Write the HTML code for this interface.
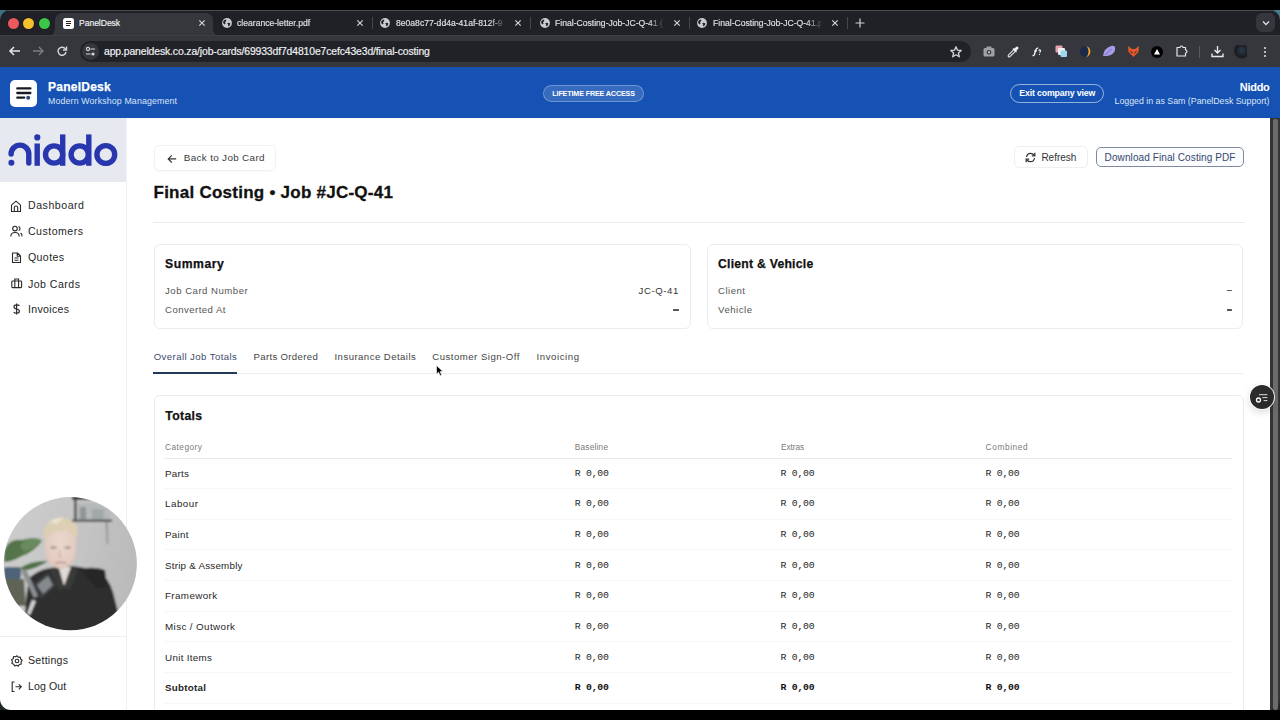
<!DOCTYPE html>
<html><head><meta charset="utf-8">
<style>
*{margin:0;padding:0;box-sizing:border-box}
html,body{width:1280px;height:720px;overflow:hidden;background:#000;font-family:"Liberation Sans",sans-serif}
.a{position:absolute}
.t{position:absolute;white-space:nowrap;line-height:1}
svg.i{position:absolute;overflow:visible}
</style></head>
<body>
<div class="a" style="left:0px;top:10px;width:10px;height:10px;background:#3f6e86;"></div>
<div class="a" style="left:1270px;top:10px;width:10px;height:10px;background:#4a7a92;"></div>
<div class="a" style="left:0px;top:10px;width:1280px;height:700px;background:#1f2127;border-radius:10px 10px 0 0"></div>
<div class="a" style="left:0px;top:690px;width:12px;height:20px;background:#1c2a2a;"></div>
<div class="a" style="left:8px;top:10px;width:1264px;height:1px;background:#4a4c52;"></div>
<div class="a" style="left:7.8999999999999995px;top:17.6px;width:11.4px;height:11.4px;background:#ec5a60;border-radius:50%;box-shadow:0 0 0 0.6px rgba(0,0,0,0.35)"></div>
<div class="a" style="left:23.0px;top:17.6px;width:11.4px;height:11.4px;background:#f4c02e;border-radius:50%;box-shadow:0 0 0 0.6px rgba(0,0,0,0.35)"></div>
<div class="a" style="left:38.5px;top:17.6px;width:11.4px;height:11.4px;background:#3bc74a;border-radius:50%;box-shadow:0 0 0 0.6px rgba(0,0,0,0.35)"></div>
<svg class="i" style="left:47px;top:13px" width="176" height="23"><path d="M0 23 Q8 23 8 15 L8 8 Q8 0 16 0 L158 0 Q166 0 166 8 L166 15 Q166 23 174 23 Z" fill="#35373d"/></svg>
<div class="a" style="left:63px;top:18px;width:11px;height:11px;background:#fff;border-radius:2.5px"></div>
<svg class="i" style="left:63px;top:18px" width="11" height="11"><path d="M3 3.5H8M3 5.5H8M3 7.5H7" stroke="#222" stroke-width="1.1"/></svg>
<div class="t" style="left:79px;top:18.62px;font-size:8.6px;color:#f2f3f5;font-weight:normal;letter-spacing:-0.05px;-webkit-text-stroke:0.15px #f2f3f5;">PanelDesk</div>
<svg class="i" style="left:196.5px;top:18px" width="10" height="10"><path d="M2.3 2.3L7.7 7.7M7.7 2.3L2.3 7.7" stroke="#d0d1d4" stroke-width="1.2"/></svg>
<svg class="i" style="left:220.8px;top:17.3px" width="12" height="12"><circle cx="6" cy="6" r="4.9" fill="#cacbce"/><path d="M2.2 4.2 Q3.5 2.5 5.2 2.6 Q5.6 4 4.5 4.8 Q3.6 5.6 4.6 6.6 L3.2 7.6 Q1.8 6.2 2.2 4.2Z" fill="#1f2127"/><path d="M6.2 6.2 Q7.6 5.4 9.4 6.4 Q9.2 8.4 7.4 9.6 Q6.8 8.4 7.2 7.6Z" fill="#1f2127"/></svg>
<div class="t" style="left:237px;top:18.52px;font-size:8.6px;color:#dfe0e3;-webkit-text-stroke:0.15px #dfe0e3;width:111px;overflow:hidden;padding-bottom:3px;-webkit-mask-image:linear-gradient(90deg,#000 85%,transparent)">clearance-letter.pdf</div>
<svg class="i" style="left:355px;top:18px" width="10" height="10"><path d="M2.3 2.3L7.7 7.7M7.7 2.3L2.3 7.7" stroke="#d2d3d6" stroke-width="1.2"/></svg>
<svg class="i" style="left:378.8px;top:17.3px" width="12" height="12"><circle cx="6" cy="6" r="4.9" fill="#cacbce"/><path d="M2.2 4.2 Q3.5 2.5 5.2 2.6 Q5.6 4 4.5 4.8 Q3.6 5.6 4.6 6.6 L3.2 7.6 Q1.8 6.2 2.2 4.2Z" fill="#1f2127"/><path d="M6.2 6.2 Q7.6 5.4 9.4 6.4 Q9.2 8.4 7.4 9.6 Q6.8 8.4 7.2 7.6Z" fill="#1f2127"/></svg>
<div class="t" style="left:396px;top:18.52px;font-size:8.6px;color:#dfe0e3;-webkit-text-stroke:0.15px #dfe0e3;width:110px;overflow:hidden;padding-bottom:3px;-webkit-mask-image:linear-gradient(90deg,#000 85%,transparent)">8e0a8c77-dd4a-41af-812f-9</div>
<svg class="i" style="left:513px;top:18px" width="10" height="10"><path d="M2.3 2.3L7.7 7.7M7.7 2.3L2.3 7.7" stroke="#d2d3d6" stroke-width="1.2"/></svg>
<svg class="i" style="left:538.8px;top:17.3px" width="12" height="12"><circle cx="6" cy="6" r="4.9" fill="#cacbce"/><path d="M2.2 4.2 Q3.5 2.5 5.2 2.6 Q5.6 4 4.5 4.8 Q3.6 5.6 4.6 6.6 L3.2 7.6 Q1.8 6.2 2.2 4.2Z" fill="#1f2127"/><path d="M6.2 6.2 Q7.6 5.4 9.4 6.4 Q9.2 8.4 7.4 9.6 Q6.8 8.4 7.2 7.6Z" fill="#1f2127"/></svg>
<div class="t" style="left:555px;top:18.52px;font-size:8.6px;color:#dfe0e3;-webkit-text-stroke:0.15px #dfe0e3;width:110px;overflow:hidden;padding-bottom:3px;-webkit-mask-image:linear-gradient(90deg,#000 85%,transparent)">Final-Costing-Job-JC-Q-41 (</div>
<svg class="i" style="left:672px;top:18px" width="10" height="10"><path d="M2.3 2.3L7.7 7.7M7.7 2.3L2.3 7.7" stroke="#d2d3d6" stroke-width="1.2"/></svg>
<svg class="i" style="left:695.8px;top:17.3px" width="12" height="12"><circle cx="6" cy="6" r="4.9" fill="#cacbce"/><path d="M2.2 4.2 Q3.5 2.5 5.2 2.6 Q5.6 4 4.5 4.8 Q3.6 5.6 4.6 6.6 L3.2 7.6 Q1.8 6.2 2.2 4.2Z" fill="#1f2127"/><path d="M6.2 6.2 Q7.6 5.4 9.4 6.4 Q9.2 8.4 7.4 9.6 Q6.8 8.4 7.2 7.6Z" fill="#1f2127"/></svg>
<div class="t" style="left:713px;top:18.52px;font-size:8.6px;color:#dfe0e3;-webkit-text-stroke:0.15px #dfe0e3;width:110px;overflow:hidden;padding-bottom:3px;-webkit-mask-image:linear-gradient(90deg,#000 85%,transparent)">Final-Costing-Job-JC-Q-41.p</div>
<svg class="i" style="left:830px;top:18px" width="10" height="10"><path d="M2.3 2.3L7.7 7.7M7.7 2.3L2.3 7.7" stroke="#d2d3d6" stroke-width="1.2"/></svg>
<div class="a" style="left:372px;top:17px;width:1px;height:12px;background:#45474d;"></div>
<div class="a" style="left:530px;top:17px;width:1px;height:12px;background:#45474d;"></div>
<div class="a" style="left:689px;top:17px;width:1px;height:12px;background:#45474d;"></div>
<div class="a" style="left:847px;top:17px;width:1px;height:12px;background:#45474d;"></div>
<svg class="i" style="left:855px;top:18px" width="10" height="10"><path d="M5 0.5V9.5M0.5 5H9.5" stroke="#d0d1d4" stroke-width="1.2"/></svg>
<div class="a" style="left:1256px;top:13px;width:19px;height:19px;background:#35373d;border-radius:6px"></div>
<svg class="i" style="left:1261px;top:19px" width="10" height="8"><path d="M2 2.5L5 5.5L8 2.5" stroke="#e0e1e4" stroke-width="1.3" fill="none"/></svg>
<div class="a" style="left:0px;top:35px;width:1280px;height:32px;background:#35373d;"></div>
<div class="a" style="left:0px;top:35px;width:1280px;height:1px;background:#3d3f45;"></div>
<svg class="i" style="left:8px;top:45px" width="14" height="12"><path d="M2 6H12M6 2L2 6L6 10" stroke="#e4e5e8" stroke-width="1.6" fill="none"/></svg>
<svg class="i" style="left:31px;top:45px" width="14" height="12"><path d="M2 6H12M8 2L12 6L8 10" stroke="#7b7d82" stroke-width="1.4" fill="none"/></svg>
<svg class="i" style="left:56px;top:45px" width="12" height="12"><path d="M9.5 4.2 A4 4 0 1 0 10 7" stroke="#d6d7da" stroke-width="1.4" fill="none"/><path d="M10.5 1.5V5H7" stroke="#d6d7da" stroke-width="1.4" fill="none"/></svg>
<div class="a" style="left:80px;top:41px;width:891px;height:21px;background:#202228;border-radius:11px"></div>
<div class="a" style="left:82px;top:43px;width:17px;height:17px;background:#35373d;border-radius:50%"></div>
<svg class="i" style="left:85px;top:46px" width="11" height="11"><circle cx="3" cy="3" r="1.6" stroke="#d6d7da" stroke-width="1.1" fill="none"/><path d="M5.5 3H10M1 8H5.5" stroke="#d6d7da" stroke-width="1.2"/><circle cx="8" cy="8" r="1.6" fill="#d6d7da"/></svg>
<div class="t" style="left:104px;top:47.20px;font-size:10.4px;color:#eeeff1;font-weight:normal;letter-spacing:-0.12px;-webkit-text-stroke:0.2px #eeeff1;">app.paneldesk.co.za/job-cards/69933df7d4810e7cefc43e3d/final-costing</div>
<svg class="i" style="left:950px;top:46px" width="12" height="12"><path d="M6 0.8L7.5 4.2L11.2 4.5L8.4 7L9.3 10.8L6 8.8L2.7 10.8L3.6 7L0.8 4.5L4.5 4.2Z" stroke="#d6d7da" stroke-width="1.3" fill="none" stroke-linejoin="round"/></svg>
<svg class="i" style="left:983px;top:46px" width="12" height="11"><rect x="0.5" y="2" width="11" height="8.5" rx="1.5" fill="#9ea0a4"/><rect x="3.5" y="0.5" width="5" height="2" fill="#9ea0a4"/><circle cx="6" cy="6.2" r="2.3" fill="#35373d"/><circle cx="6" cy="6.2" r="1" fill="#e8e8e8"/></svg>
<svg class="i" style="left:1007px;top:45px" width="13" height="13"><path d="M2.2 10.8 L7.5 5.5" stroke="#f0f0f0" stroke-width="3.2" stroke-linecap="round"/><path d="M2.2 10.8 L7.5 5.5" stroke="#35373d" stroke-width="1.2" stroke-linecap="round"/><path d="M6.5 4.5 L9 2 Q10 1 11 2 Q12 3 11 4 L8.5 6.5Z" fill="#f0f0f0"/><path d="M6 3.5L9.5 7" stroke="#f0f0f0" stroke-width="1.4"/></svg>
<svg class="i" style="left:1031px;top:46px" width="12" height="12"><path d="M1.5 9.5 Q3 10 3.6 8 L5 3.5 Q5.6 1.8 7.2 2.2" stroke="#f0f0f0" stroke-width="1.4" fill="none"/><path d="M3 5H6" stroke="#f0f0f0" stroke-width="1.1"/><path d="M7.6 4.6 Q8.2 3.6 9.2 4 Q10 4.6 9.2 5.6 L8.6 6.6" stroke="#f0f0f0" stroke-width="1.1" fill="none"/><circle cx="8.5" cy="8.4" r="0.6" fill="#f0f0f0"/></svg>
<svg class="i" style="left:1055px;top:45px" width="13" height="13"><rect x="0.5" y="0.5" width="7" height="7" rx="1" fill="#e8a0b0"/><rect x="3" y="3" width="7" height="7" rx="1" fill="#f0f0f0"/><rect x="5.5" y="5.5" width="6.5" height="6.5" rx="1" fill="#9fd6ef"/></svg>
<svg class="i" style="left:1079px;top:45px" width="13" height="13"><circle cx="6.5" cy="6.5" r="5.5" fill="#1c2a4a"/><path d="M6 1 A5.5 5.5 0 0 1 6 12 A3.5 5.5 0 0 0 6 1Z" fill="#f0a030"/></svg>
<svg class="i" style="left:1102px;top:45px" width="15" height="13"><path d="M1 11 Q2 3 9 1 Q14 0 13 5 Q12 10 5 11 Z" fill="#a59de8"/><path d="M3 10 L10 4" stroke="#6f68c0" stroke-width="0.8"/></svg>
<svg class="i" style="left:1127px;top:45px" width="13" height="13"><path d="M1 1L5 4L8 4L12 1L11.5 7L6.5 12L1.5 7Z" fill="#e2582e"/><path d="M3.5 6.5L5.5 8M9.5 6.5L7.5 8" stroke="#3a1a10" stroke-width="1"/></svg>
<svg class="i" style="left:1151px;top:46px" width="12" height="12"><circle cx="6" cy="6" r="6" fill="#000"/><path d="M6 3L9 8.5H3Z" fill="#fff"/></svg>
<svg class="i" style="left:1175px;top:45px" width="13" height="13"><path d="M2 2.5H5Q5 1 6.5 1Q8 1 8 2.5H10.5V5Q12 5 12 6.5Q12 8 10.5 8V11H2Z" stroke="#e6e7ea" stroke-width="1.2" fill="none" stroke-linejoin="round"/></svg>
<div class="a" style="left:1199px;top:46px;width:1px;height:12px;background:#5a5c62;"></div>
<svg class="i" style="left:1211px;top:45px" width="13" height="13"><path d="M6.5 1V8M3.5 5L6.5 8L9.5 5M1 8.5V11.5H12V8.5" stroke="#e6e7ea" stroke-width="1.4" fill="none"/></svg>
<div class="a" style="left:1234px;top:45px;width:13px;height:14px;border-radius:3px;background:radial-gradient(circle at 60% 40%,#2a3a50,#1a1a1a 60%,#35373d 75%)"></div>
<div class="a" style="left:1264px;top:47.2px;width:2.2px;height:2.2px;background:#e6e7ea;border-radius:50%"></div>
<div class="a" style="left:1264px;top:51.2px;width:2.2px;height:2.2px;background:#e6e7ea;border-radius:50%"></div>
<div class="a" style="left:1264px;top:55.2px;width:2.2px;height:2.2px;background:#e6e7ea;border-radius:50%"></div>
<div class="a" style="left:0px;top:67px;width:1280px;height:51px;background:#1552b4;"></div>
<div class="a" style="left:10px;top:80px;width:27px;height:27px;background:#ffffff;border-radius:5px"></div>
<svg class="i" style="left:10px;top:80px" width="27" height="27"><path d="M7.3 8.4H20.4M7.3 13H20.4M7.3 17.7H14.2" stroke="#161a22" stroke-width="2.3" stroke-linecap="round"/><circle cx="18.2" cy="17.7" r="2" fill="#2a4a80"/></svg>
<div class="t" style="left:48px;top:81.44px;font-size:12px;color:#ffffff;font-weight:bold;letter-spacing:0.25px;-webkit-text-stroke:0.25px #fff;">PanelDesk</div>
<div class="t" style="left:48px;top:97.45px;font-size:8.8px;color:#dbe5f7;font-weight:normal;letter-spacing:0.14px;">Modern Workshop Management</div>
<div class="a" style="left:543px;top:84.5px;width:101px;height:17.5px;background:rgba(255,255,255,0.15);border-radius:9px;border:1px solid rgba(255,255,255,0.28)"></div>
<div class="t" style="left:552.3px;top:89.71px;font-size:7.2px;color:#ffffff;font-weight:bold;letter-spacing:-0.15px;">LIFETIME FREE ACCESS</div>
<div class="a" style="left:1009.5px;top:84px;width:94px;height:19px;background:transparent;border-radius:10px;border:1px solid rgba(255,255,255,0.55)"></div>
<div class="t" style="left:1019.3px;top:88.95px;font-size:8.8px;color:#ffffff;font-weight:bold;letter-spacing:-0.17px;">Exit company view</div>
<div class="t" style="right:10.5px;top:82.09px;font-size:11px;color:#ffffff;font-weight:bold;letter-spacing:-0.3px;">Niddo</div>
<div class="t" style="right:10.5px;top:97.05px;font-size:8.8px;color:#dbe5f7;font-weight:normal;letter-spacing:0px;">Logged in as Sam (PanelDesk Support)</div>
<div class="a" style="left:0px;top:118px;width:1270px;height:592px;background:#ffffff;border-bottom-left-radius:11px"></div>
<div class="a" style="left:0px;top:118px;width:126px;height:64px;background:#e6e9ef;"></div>
<div class="a" style="left:126px;top:118px;width:1px;height:592px;background:#eef0f3;"></div>
<div class="a" style="left:0px;top:636px;width:126px;height:1px;background:#eceef1;"></div>
<svg class="i" style="left:0;top:0" width="1" height="1">
<g stroke="#2837ad" stroke-width="5.4" fill="none" stroke-linecap="round">
<path d="M11.1 154 A8.85 8.85 0 0 1 28.8 154 V163"/>
<path d="M37.2 143.5 V165.8" stroke-linecap="butt"/>
<circle cx="54.1" cy="154.5" r="8.6"/>
<path d="M62.7 134.4 V165.8" stroke-linecap="butt"/>
<circle cx="79.7" cy="154.5" r="8.6"/>
<path d="M88.8 134.4 V165.8" stroke-linecap="butt"/>
<circle cx="105.8" cy="154.5" r="8.9"/>
</g>
<circle cx="11.4" cy="162.8" r="3" fill="#2837ad"/>
<circle cx="37.3" cy="137.4" r="3.1" fill="#2837ad"/>
</svg>
<svg class="i" style="left:10px;top:199.5px" width="13" height="13" viewBox="0 0 13 13"><path d="M1.5 11.5V5.2L6 1.2L10.5 5.2V11.5Z M4.3 11.5V7.5Q4.3 6 6 6Q7.7 6 7.7 7.5V11.5" stroke="#2a2a2a" stroke-width="1.1" fill="none" stroke-linejoin="round"/></svg>
<svg class="i" style="left:10px;top:225px" width="13" height="13" viewBox="0 0 13 13"><circle cx="5" cy="3.6" r="2.3" stroke="#2a2a2a" stroke-width="1.1" fill="none"/><path d="M0.8 11.5Q0.8 7.5 5 7.5Q9.2 7.5 9.2 11.5" stroke="#2a2a2a" stroke-width="1.1" fill="none"/><path d="M8.5 1.4Q10.2 2 10 3.8Q9.8 5 8.8 5.6M10.5 8Q12.3 9 12 11.5" stroke="#2a2a2a" stroke-width="1.1" fill="none"/></svg>
<svg class="i" style="left:11px;top:252px" width="13" height="13" viewBox="0 0 13 13"><path d="M1.5 1H6.5L9.5 4V10.5H1.5Z M6.2 1V4.3H9.5 M3.5 6H7.5M3.5 8.2H7.5" stroke="#2a2a2a" stroke-width="1.1" fill="none" stroke-linejoin="round"/></svg>
<svg class="i" style="left:10.6px;top:277.6px" width="13" height="13" viewBox="0 0 13 13"><rect x="0.8" y="3" width="9.8" height="6.6" rx="0.8" stroke="#2a2a2a" stroke-width="1.1" fill="none"/><path d="M3.8 3V1H7.6V3M3.8 3V9.6M7.6 3V9.6" stroke="#2a2a2a" stroke-width="1.1" fill="none"/></svg>
<svg class="i" style="left:12.5px;top:303px" width="13" height="13" viewBox="0 0 13 13"><path d="M3.6 0.5V11.5 M6.5 2.8Q6 1.8 3.6 1.8Q1 1.8 1 3.8Q1 5.6 3.6 6Q6.4 6.4 6.4 8.3Q6.4 10.2 3.6 10.2Q1.2 10.2 0.8 8.8" stroke="#2a2a2a" stroke-width="1.2" fill="none"/></svg>
<div class="t" style="left:28px;top:199.53px;font-size:10.6px;color:#262626;font-weight:normal;letter-spacing:0.52px;">Dashboard</div>
<div class="t" style="left:28px;top:226.23px;font-size:10.6px;color:#262626;font-weight:normal;letter-spacing:0.47px;">Customers</div>
<div class="t" style="left:28px;top:252.33px;font-size:10.6px;color:#262626;font-weight:normal;letter-spacing:0.37px;">Quotes</div>
<div class="t" style="left:28px;top:278.53px;font-size:10.6px;color:#262626;font-weight:normal;letter-spacing:0.46px;">Job Cards</div>
<div class="t" style="left:28px;top:304.43px;font-size:10.6px;color:#262626;font-weight:normal;letter-spacing:0.31px;">Invoices</div>
<div class="t" style="left:28px;top:654.83px;font-size:10.6px;color:#262626;font-weight:normal;letter-spacing:0.25px;">Settings</div>
<div class="t" style="left:28px;top:681.03px;font-size:10.6px;color:#262626;font-weight:normal;letter-spacing:0.1px;">Log Out</div>
<svg class="i" style="left:10.8px;top:654.5px" width="13" height="13" viewBox="0 0 13 13"><path d="M6 0.8L7.3 2.2L9.3 2L9.6 4L11.2 5.3L10 7L10.3 9L8.3 9.5L7.3 11.2L5.5 10.3L3.6 11L2.8 9.2L0.9 8.5L1.4 6.5L0.6 4.7L2.3 3.6L2.5 1.6L4.5 1.8Z" stroke="#2a2a2a" stroke-width="1.1" fill="none" stroke-linejoin="round"/><circle cx="6" cy="6" r="1.8" stroke="#2a2a2a" stroke-width="1.1" fill="none"/></svg>
<svg class="i" style="left:11px;top:681px" width="13" height="13" viewBox="0 0 13 13"><path d="M3.5 1H1.2V10.5H3.5 M4.5 5.8H10.2M7.8 3.3L10.3 5.8L7.8 8.3" stroke="#2a2a2a" stroke-width="1.1" fill="none"/></svg>
<div class="a" style="left:154px;top:145px;width:121.5px;height:25.5px;background:#ffffff;border:1px solid #f1f1f1;border-radius:5px;box-shadow:0 1px 2px rgba(0,0,0,0.03)"></div>
<svg class="i" style="left:166.6px;top:155px" width="13" height="13" viewBox="0 0 13 13"><path d="M9.2 3.9H1.2M4.8 0.3L1.2 3.9L4.8 7.5" stroke="#333" stroke-width="1.15" fill="none"/></svg>
<div class="t" style="left:183.8px;top:152.82px;font-size:9.9px;color:#3b3b3b;font-weight:normal;letter-spacing:0.33px;">Back to Job Card</div>
<div class="t" style="left:153.5px;top:184.21px;font-size:17px;color:#111111;font-weight:bold;letter-spacing:0.25px;-webkit-text-stroke:0.3px #111;">Final Costing &bull; Job #JC-Q-41</div>
<div class="a" style="left:1013.5px;top:145.5px;width:74px;height:22.5px;background:#ffffff;border:1px solid #efefef;border-radius:5px"></div>
<svg class="i" style="left:1024.8px;top:151.5px" width="13" height="13" viewBox="0 0 13 13"><path d="M1.5 5Q2.2 1.3 5.5 1.3Q7.8 1.3 9 3.2M9.5 6Q8.8 9.7 5.5 9.7Q3.2 9.7 2 7.8" stroke="#333" stroke-width="1.3" fill="none"/><path d="M9.8 0.8V3.8H6.8M1.2 10.2V7.2H4.2" stroke="#333" stroke-width="1.3" fill="none"/></svg>
<div class="t" style="left:1041.4px;top:152.94px;font-size:10px;color:#333333;font-weight:normal;letter-spacing:0.0px;">Refresh</div>
<div class="a" style="left:1096px;top:146.7px;width:147.5px;height:20.8px;background:#fbfcfe;border:1.3px solid #8089a0;border-radius:5px"></div>
<div class="t" style="left:1104.6px;top:152.94px;font-size:10px;color:#34476c;font-weight:normal;letter-spacing:0.1px;">Download Final Costing PDF</div>
<div class="a" style="left:153px;top:222px;width:1092px;height:1px;background:#ececec;"></div>
<div class="a" style="left:153.5px;top:244px;width:537px;height:84.5px;background:#ffffff;border:1px solid #ececec;border-radius:6px"></div>
<div class="t" style="left:165px;top:258.37px;font-size:12.2px;color:#111111;font-weight:bold;letter-spacing:0.55px;-webkit-text-stroke:0.25px #111;">Summary</div>
<div class="t" style="left:165px;top:285.67px;font-size:9.6px;color:#555555;font-weight:normal;letter-spacing:0.5px;">Job Card Number</div>
<div class="t" style="left:165px;top:304.67px;font-size:9.6px;color:#555555;font-weight:normal;letter-spacing:0.46px;">Converted At</div>
<div class="t" style="right:601px;top:285.67px;font-size:9.6px;color:#333333;font-weight:normal;letter-spacing:0.6px;">JC-Q-41</div>
<div class="a" style="left:673.4px;top:309.2px;width:5.3px;height:1.4px;background:#555555;border-radius:0.6px"></div>
<div class="a" style="left:707px;top:244px;width:536px;height:84.5px;background:#ffffff;border:1px solid #ececec;border-radius:6px"></div>
<div class="t" style="left:718px;top:258.37px;font-size:12.2px;color:#111111;font-weight:bold;letter-spacing:0.25px;-webkit-text-stroke:0.25px #111;">Client &amp; Vehicle</div>
<div class="t" style="left:718px;top:285.67px;font-size:9.6px;color:#555555;font-weight:normal;letter-spacing:0.49px;">Client</div>
<div class="t" style="left:718px;top:304.67px;font-size:9.6px;color:#555555;font-weight:normal;letter-spacing:0.51px;">Vehicle</div>
<div class="a" style="left:1226.6px;top:289.8px;width:5.3px;height:1.4px;background:#555555;border-radius:0.6px"></div>
<div class="a" style="left:1226.8px;top:309.2px;width:5.3px;height:1.4px;background:#555555;border-radius:0.6px"></div>
<div class="a" style="left:153px;top:373px;width:1090px;height:1px;background:#ededed;"></div>
<div class="a" style="left:153px;top:371.5px;width:84px;height:2px;background:#23395a;"></div>
<div class="t" style="left:153.7px;top:351.77px;font-size:9.6px;color:#3c4b6b;font-weight:normal;letter-spacing:0.42000000000000004px;">Overall Job Totals</div>
<div class="t" style="left:253.5px;top:351.77px;font-size:9.6px;color:#444444;font-weight:normal;letter-spacing:0.32999999999999996px;">Parts Ordered</div>
<div class="t" style="left:334.5px;top:351.77px;font-size:9.6px;color:#444444;font-weight:normal;letter-spacing:0.44999999999999996px;">Insurance Details</div>
<div class="t" style="left:432.3px;top:351.77px;font-size:9.6px;color:#444444;font-weight:normal;letter-spacing:0.49px;">Customer Sign-Off</div>
<div class="t" style="left:536.5px;top:351.77px;font-size:9.6px;color:#444444;font-weight:normal;letter-spacing:0.59px;">Invoicing</div>
<div class="a" style="left:153.5px;top:395px;width:1090px;height:340px;background:#ffffff;border:1px solid #ececec;border-radius:6px"></div>
<div class="t" style="left:165.3px;top:409.87px;font-size:12.2px;color:#111111;font-weight:bold;letter-spacing:0.35px;-webkit-text-stroke:0.25px #111;">Totals</div>
<div class="t" style="left:165px;top:442.57px;font-size:8.3px;color:#7a7a7a;font-weight:normal;letter-spacing:0.47px;">Category</div>
<div class="t" style="left:574.8px;top:442.57px;font-size:8.3px;color:#7a7a7a;font-weight:normal;letter-spacing:0.2px;">Baseline</div>
<div class="t" style="left:781px;top:442.57px;font-size:8.3px;color:#7a7a7a;font-weight:normal;letter-spacing:-0.05px;">Extras</div>
<div class="t" style="left:985.6px;top:442.57px;font-size:8.3px;color:#7a7a7a;font-weight:normal;letter-spacing:0.6px;">Combined</div>
<div class="a" style="left:164px;top:458px;width:1068px;height:1px;background:#e9e9e9;"></div>
<div class="t" style="left:165px;top:468.70px;font-size:9.8px;color:#262626;font-weight:normal;letter-spacing:0.28px;">Parts</div>
<div class="t" style="left:574.8px;top:468.70px;font-size:9.8px;color:#262626;font-weight:normal;letter-spacing:-0.25px;font-family:'Liberation Mono',monospace;">R 0,00</div>
<div class="t" style="left:780.5px;top:468.70px;font-size:9.8px;color:#262626;font-weight:normal;letter-spacing:-0.25px;font-family:'Liberation Mono',monospace;">R 0,00</div>
<div class="t" style="left:985.6px;top:468.70px;font-size:9.8px;color:#262626;font-weight:normal;letter-spacing:-0.25px;font-family:'Liberation Mono',monospace;">R 0,00</div>
<div class="a" style="left:164px;top:488.0px;width:1068px;height:1px;background:#f7f7f7;"></div>
<div class="t" style="left:165px;top:499.35px;font-size:9.8px;color:#262626;font-weight:normal;letter-spacing:0.5px;">Labour</div>
<div class="t" style="left:574.8px;top:499.35px;font-size:9.8px;color:#262626;font-weight:normal;letter-spacing:-0.25px;font-family:'Liberation Mono',monospace;">R 0,00</div>
<div class="t" style="left:780.5px;top:499.35px;font-size:9.8px;color:#262626;font-weight:normal;letter-spacing:-0.25px;font-family:'Liberation Mono',monospace;">R 0,00</div>
<div class="t" style="left:985.6px;top:499.35px;font-size:9.8px;color:#262626;font-weight:normal;letter-spacing:-0.25px;font-family:'Liberation Mono',monospace;">R 0,00</div>
<div class="a" style="left:164px;top:518.65px;width:1068px;height:1px;background:#f7f7f7;"></div>
<div class="t" style="left:165px;top:530.00px;font-size:9.8px;color:#262626;font-weight:normal;letter-spacing:0.3px;">Paint</div>
<div class="t" style="left:574.8px;top:530.00px;font-size:9.8px;color:#262626;font-weight:normal;letter-spacing:-0.25px;font-family:'Liberation Mono',monospace;">R 0,00</div>
<div class="t" style="left:780.5px;top:530.00px;font-size:9.8px;color:#262626;font-weight:normal;letter-spacing:-0.25px;font-family:'Liberation Mono',monospace;">R 0,00</div>
<div class="t" style="left:985.6px;top:530.00px;font-size:9.8px;color:#262626;font-weight:normal;letter-spacing:-0.25px;font-family:'Liberation Mono',monospace;">R 0,00</div>
<div class="a" style="left:164px;top:549.3px;width:1068px;height:1px;background:#f7f7f7;"></div>
<div class="t" style="left:165px;top:560.65px;font-size:9.8px;color:#262626;font-weight:normal;letter-spacing:0.23px;">Strip &amp; Assembly</div>
<div class="t" style="left:574.8px;top:560.65px;font-size:9.8px;color:#262626;font-weight:normal;letter-spacing:-0.25px;font-family:'Liberation Mono',monospace;">R 0,00</div>
<div class="t" style="left:780.5px;top:560.65px;font-size:9.8px;color:#262626;font-weight:normal;letter-spacing:-0.25px;font-family:'Liberation Mono',monospace;">R 0,00</div>
<div class="t" style="left:985.6px;top:560.65px;font-size:9.8px;color:#262626;font-weight:normal;letter-spacing:-0.25px;font-family:'Liberation Mono',monospace;">R 0,00</div>
<div class="a" style="left:164px;top:579.95px;width:1068px;height:1px;background:#f7f7f7;"></div>
<div class="t" style="left:165px;top:591.30px;font-size:9.8px;color:#262626;font-weight:normal;letter-spacing:0.38px;">Framework</div>
<div class="t" style="left:574.8px;top:591.30px;font-size:9.8px;color:#262626;font-weight:normal;letter-spacing:-0.25px;font-family:'Liberation Mono',monospace;">R 0,00</div>
<div class="t" style="left:780.5px;top:591.30px;font-size:9.8px;color:#262626;font-weight:normal;letter-spacing:-0.25px;font-family:'Liberation Mono',monospace;">R 0,00</div>
<div class="t" style="left:985.6px;top:591.30px;font-size:9.8px;color:#262626;font-weight:normal;letter-spacing:-0.25px;font-family:'Liberation Mono',monospace;">R 0,00</div>
<div class="a" style="left:164px;top:610.6px;width:1068px;height:1px;background:#f7f7f7;"></div>
<div class="t" style="left:165px;top:621.95px;font-size:9.8px;color:#262626;font-weight:normal;letter-spacing:0.4px;">Misc / Outwork</div>
<div class="t" style="left:574.8px;top:621.95px;font-size:9.8px;color:#262626;font-weight:normal;letter-spacing:-0.25px;font-family:'Liberation Mono',monospace;">R 0,00</div>
<div class="t" style="left:780.5px;top:621.95px;font-size:9.8px;color:#262626;font-weight:normal;letter-spacing:-0.25px;font-family:'Liberation Mono',monospace;">R 0,00</div>
<div class="t" style="left:985.6px;top:621.95px;font-size:9.8px;color:#262626;font-weight:normal;letter-spacing:-0.25px;font-family:'Liberation Mono',monospace;">R 0,00</div>
<div class="a" style="left:164px;top:641.25px;width:1068px;height:1px;background:#f7f7f7;"></div>
<div class="t" style="left:165px;top:652.60px;font-size:9.8px;color:#262626;font-weight:normal;letter-spacing:0.32px;">Unit Items</div>
<div class="t" style="left:574.8px;top:652.60px;font-size:9.8px;color:#262626;font-weight:normal;letter-spacing:-0.25px;font-family:'Liberation Mono',monospace;">R 0,00</div>
<div class="t" style="left:780.5px;top:652.60px;font-size:9.8px;color:#262626;font-weight:normal;letter-spacing:-0.25px;font-family:'Liberation Mono',monospace;">R 0,00</div>
<div class="t" style="left:985.6px;top:652.60px;font-size:9.8px;color:#262626;font-weight:normal;letter-spacing:-0.25px;font-family:'Liberation Mono',monospace;">R 0,00</div>
<div class="a" style="left:164px;top:671.9px;width:1068px;height:1px;background:#f7f7f7;"></div>
<div class="t" style="left:165px;top:683.25px;font-size:9.8px;color:#262626;font-weight:bold;letter-spacing:0.26px;">Subtotal</div>
<div class="t" style="left:574.8px;top:683.25px;font-size:9.8px;color:#111;font-weight:bold;letter-spacing:-0.25px;font-family:'Liberation Mono',monospace;">R 0,00</div>
<div class="t" style="left:780.5px;top:683.25px;font-size:9.8px;color:#111;font-weight:bold;letter-spacing:-0.25px;font-family:'Liberation Mono',monospace;">R 0,00</div>
<div class="t" style="left:985.6px;top:683.25px;font-size:9.8px;color:#111;font-weight:bold;letter-spacing:-0.25px;font-family:'Liberation Mono',monospace;">R 0,00</div>
<div class="a" style="left:164px;top:702.55px;width:1068px;height:1px;background:#f7f7f7;"></div>
<div class="a" style="left:1270px;top:118px;width:10px;height:592px;background:#343434;border-bottom-right-radius:10px"></div>
<div class="a" style="left:1272.5px;top:119px;width:5px;height:591px;background:#6c6c6c;border-radius:2px"></div>
<svg class="i" style="left:436px;top:364.5px" width="8" height="12"><path d="M0.5 0.5V9L2.6 7.2L4.2 10.8L5.6 10.1L4.1 6.6H7Z" fill="#000" stroke="#fff" stroke-width="0.6"/></svg>
<div class="a" style="left:1250.4px;top:385px;width:24px;height:24px;border-radius:50%;background:#2b2b2b;box-shadow:0 0 0 1px rgba(255,255,255,0.85),0 3px 9px rgba(0,0,0,0.16)"></div>
<svg class="i" style="left:1250.4px;top:385px" width="24" height="24"><path d="M9 9.7H17.4M12.4 12.6H17.4M13.6 15.6H17.4" stroke="#e0e0e0" stroke-width="1"/><circle cx="8.5" cy="15" r="2" stroke="#fff" stroke-width="1.3" fill="#2b2b2b"/></svg>
<svg class="i" style="left:0;top:495px" width="140" height="140" viewBox="0 495 140 140">
<defs><clipPath id="cam"><circle cx="70.3" cy="563.7" r="66.6"/></clipPath>
<linearGradient id="bgg" x1="0" y1="0" x2="1" y2="0.2"><stop offset="0" stop-color="#cdcdcd"/><stop offset="0.5" stop-color="#c7c7c7"/><stop offset="1" stop-color="#bbbbbb"/></linearGradient>
<radialGradient id="face" cx="0.5" cy="0.45" r="0.6"><stop offset="0" stop-color="#ecd8cf"/><stop offset="0.8" stop-color="#e3cbc0"/><stop offset="1" stop-color="#d9c0b4"/></radialGradient>
<filter id="bl" x="-5%" y="-5%" width="110%" height="110%"><feGaussianBlur stdDeviation="0.8"/></filter></defs>
<g clip-path="url(#cam)"><g filter="url(#bl)">
<rect x="0" y="495" width="140" height="140" fill="url(#bgg)"/>
<rect x="72" y="496" width="36" height="4" fill="#3c3c3c"/>
<rect x="74" y="499" width="2.5" height="22" fill="#4c4c4c"/>
<rect x="77" y="503" width="33" height="17" fill="#b6b9ba"/>
<rect x="80" y="507" width="6" height="12" fill="#8f9597"/>
<rect x="92" y="509" width="12" height="10" fill="#a2a8aa"/>
<rect x="72" y="519.5" width="40" height="2.5" fill="#585858"/>
<path d="M105.5 522 L106.5 544 L108.5 544 L108 522Z" fill="#9c9c9c"/>
<path d="M4 552 Q8 538 22 540 Q34 536 42 541 Q34 552 22 556 Q12 562 4 562Z" fill="#537548"/>
<path d="M20 545 Q30 534 42 540 Q36 548 24 552Z" fill="#6a8a5e"/>
<path d="M20 568 Q32 560 48 561 Q38 568 24 571Z" fill="#4f6f45"/>
<rect x="4" y="567" width="17" height="12" rx="2" fill="#4d6478"/>
<path d="M4 579 L24 579 L26 606 L4 606Z" fill="#5e6455"/>
<path d="M30 577 Q40 569 50 568 L58 567 L72 566 Q88 568 97 571 Q108 576 113 592 L118 612 L124 640 L22 640 L26 602 Q27 586 30 577Z" fill="#2e2f2d"/>
<path d="M80 569 Q94 566 105 570 L107 587 L96 588 Z" fill="#252625"/>
<path d="M58.5 567 L64 586 L71 567 Z" fill="#e2dad6"/>
<path d="M56 567 L64 588 L59 591 L50 570Z" fill="#393a37"/>
<path d="M72 566 L64 588 L70 590 L78 569Z" fill="#393a37"/>
<path d="M45 532 Q45 520 60 520 Q76 520 76 534 L76 552 Q75 566 61 569 Q47 567 45 552Z" fill="url(#face)"/>
<path d="M44 537 Q42 522 56 519 Q70 516 77 526 Q78 534 76 540 Q73 531 64 530 Q52 529 46 540Z" fill="#dccfb4"/>
<path d="M50 522 Q56 517 64 518 Q60 521 56 524Z" fill="#ede4cf"/>
<ellipse cx="53.5" cy="547.5" rx="3.2" ry="1.3" fill="#a8958c"/>
<ellipse cx="67.5" cy="547.5" rx="3.2" ry="1.3" fill="#a8958c"/>
<path d="M60 550 L59 557 L62 557" stroke="#c9aca2" stroke-width="1" fill="none"/>
<path d="M55.5 563 Q61 561.5 66 563" stroke="#b98f88" stroke-width="1.4" fill="none"/>
<path d="M21 571 L34 598 L38 596 L26 569Z" fill="#8b9093"/>
<path d="M33 584 L48 572 L56 586 L41 599Z" fill="#3a3d40"/>
<path d="M37 585 L48 576 L53 585 L43 594Z" fill="#858a8d"/>
<path d="M32 600 L27 614 L30 615 L36 601Z" fill="#d6d6d6"/>
</g></g>
</svg>
<div class="a" style="left:0px;top:710px;width:1280px;height:10px;background:#000000;"></div>
</body></html>
